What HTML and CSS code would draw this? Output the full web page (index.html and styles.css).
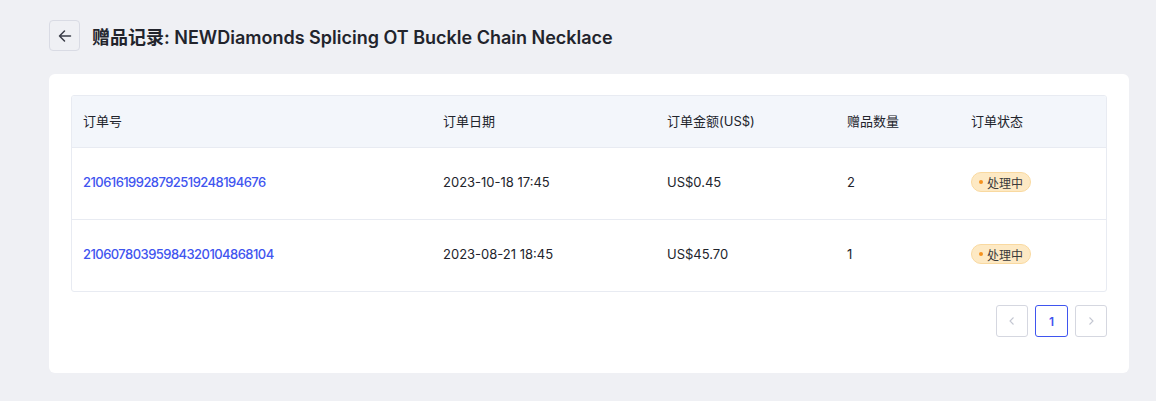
FILE: index.html
```html
<!DOCTYPE html>
<html lang="zh">
<head>
<meta charset="utf-8">
<link rel="stylesheet" href="styles.css">
</head>
<body>
<div class="page">
  <div class="header">
    <button class="back" aria-label="back">
      <svg width="16" height="16" viewBox="0 0 16 16" fill="none" stroke="#3a3d48" stroke-width="1.5" stroke-linecap="round" stroke-linejoin="round"><path d="M13.5 8H2.5M7.5 3L2.5 8l5 5"/></svg>
    </button>
    <h1 class="title">赠品记录: NEWDiamonds Splicing OT Buckle Chain Necklace</h1>
  </div>
  <div class="card">
    <div class="table">
      <div class="row head">
        <div class="c c1">订单号</div>
        <div class="c c2">订单日期</div>
        <div class="c c3">订单金额(US$)</div>
        <div class="c c4">赠品数量</div>
        <div class="c c5">订单状态</div>
      </div>
      <div class="row">
        <div class="c c1"><a class="link">21061619928792519248194676</a></div>
        <div class="c c2">2023-10-18 17:45</div>
        <div class="c c3">US$0.45</div>
        <div class="c c4">2</div>
        <div class="c c5"><span class="tag"><i class="dot"></i>处理中</span></div>
      </div>
      <div class="row">
        <div class="c c1"><a class="link">21060780395984320104868104</a></div>
        <div class="c c2">2023-08-21 18:45</div>
        <div class="c c3">US$45.70</div>
        <div class="c c4">1</div>
        <div class="c c5"><span class="tag"><i class="dot"></i>处理中</span></div>
      </div>
    </div>
    <div class="pager">
      <button class="pg disabled"><svg width="10" height="10" viewBox="0 0 10 10" fill="none" stroke="#c3c6d1" stroke-width="1.1"><path d="M6.5 1.5L3 5l3.5 3.5"/></svg></button>
      <button class="pg active">1</button>
      <button class="pg disabled"><svg width="10" height="10" viewBox="0 0 10 10" fill="none" stroke="#c3c6d1" stroke-width="1.1"><path d="M3.5 1.5L7 5 3.5 8.5"/></svg></button>
    </div>
  </div>
</div>
</body>
</html>
```
FILE: styles.css
```css
* { box-sizing: border-box; }
html, body { margin: 0; padding: 0; }
body {
  background: #eff0f4;
  font-family: Inter, "Noto Sans CJK SC", sans-serif;
  color: #22242c;
  width: 1156px;
  height: 401px;
  overflow: hidden;
}
.page { padding: 20px 27px 0 49px; }
.header { display: flex; align-items: center; gap: 12px; height: 31px; }
.back {
  width: 31px; height: 31px;
  border: 1px solid #d9dbe4; border-radius: 4px;
  background: #eff0f4;
  display: flex; align-items: center; justify-content: center;
  padding: 0; margin: 0;
}
.title {
  margin: 0; font-size: 18px; font-weight: 600; color: #22242c;
  letter-spacing: 0;
}
.card {
  margin-top: 23px;
  background: #fff;
  border-radius: 6px;
  padding: 21px 22px 36px 22px;
  height: 299px;
}
.table { border: 1px solid #e8ebf2; border-radius: 3px; overflow: hidden; }
.row { display: flex; height: 72px; align-items: center; border-top: 1px solid #e8ebf2; font-size: 13px; padding-bottom: 4px; }
.row.head { height: 51px; border-top: 0; background: #f3f6fb; padding-bottom: 2px; }
.c { padding-left: 11px; }
.c1 { width: 360px; }
.c2 { width: 224px; }
.c3 { width: 180px; }
.c4 { width: 124px; }
.c5 { flex: 1; }
.link { color: #3f55ef; font-weight: 500; letter-spacing: -0.55px; }
.tag {
  display: inline-flex; align-items: center; gap: 4px;
  height: 20px; padding: 0 7px 0 7px;
  background: #fde9c4; border: 1px solid #f9d9a0; border-radius: 10px;
  font-size: 12px; color: #3a3a3a;
  margin-top: -2px;
}
.dot { width: 4px; height: 4px; border-radius: 50%; background: #f5921e; display: inline-block; }
.pager { display: flex; justify-content: flex-end; gap: 7px; margin-top: 13px; }
.pg {
  width: 32px; height: 32px; border: 1px solid #d5d7e0; border-radius: 3px;
  background: #fff; padding: 0; display: flex; align-items: center; justify-content: center;
  font-family: Inter, sans-serif; font-size: 12px; font-weight: 600; color: #3f55ef;
}
.pg.active { border-color: #3f55ef; width: 33px; }
```
